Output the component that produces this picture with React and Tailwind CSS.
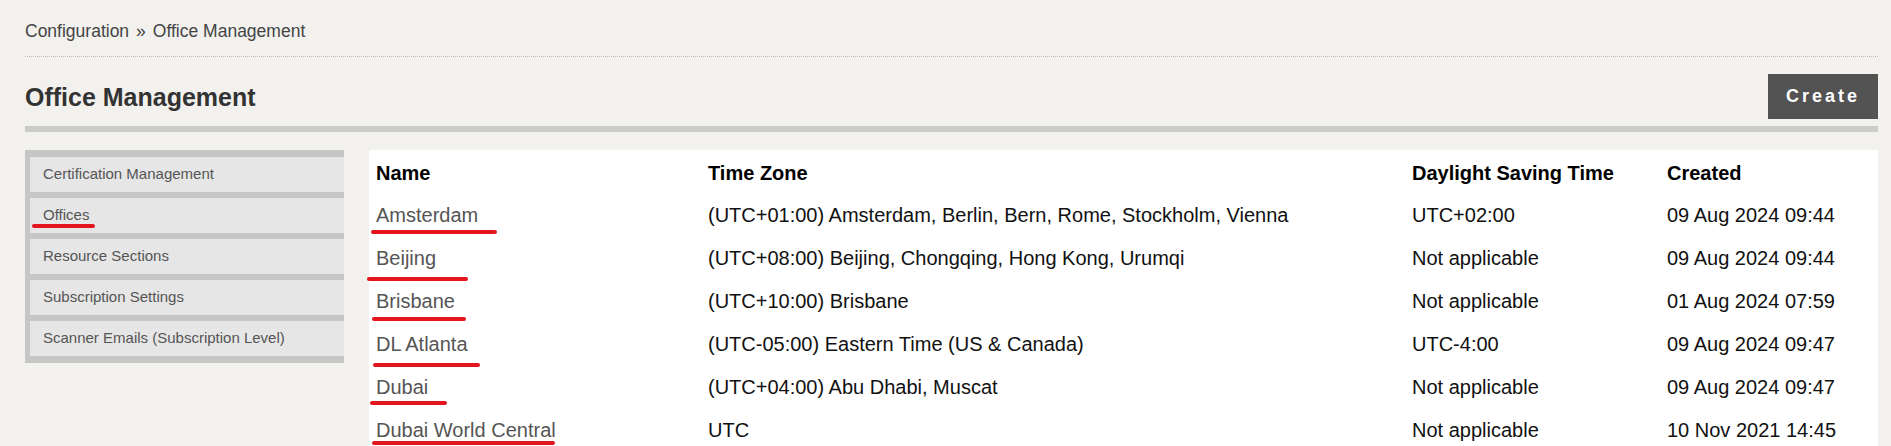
const menu = [
  { label: "Certification Management" },
  { label: "Offices", mark: true },
  { label: "Resource Sections" },
  { label: "Subscription Settings" },
  { label: "Scanner Emails (Subscription Level)" },
];

// mark = red annotation line under the name: [left, top, width]
const offices = [
  { name: "Amsterdam", tz: "(UTC+01:00) Amsterdam, Berlin, Bern, Rome, Stockholm, Vienna", dst: "UTC+02:00", created: "09 Aug 2024 09:44", mark: [2, 36, 126] },
  { name: "Beijing", tz: "(UTC+08:00) Beijing, Chongqing, Hong Kong, Urumqi", dst: "Not applicable", created: "09 Aug 2024 09:44", mark: [-2, 40, 101] },
  { name: "Brisbane", tz: "(UTC+10:00) Brisbane", dst: "Not applicable", created: "01 Aug 2024 07:59", mark: [3, 37, 94] },
  { name: "DL Atlanta", tz: "(UTC-05:00) Eastern Time (US & Canada)", dst: "UTC-4:00", created: "09 Aug 2024 09:47", mark: [4, 40, 107] },
  { name: "Dubai", tz: "(UTC+04:00) Abu Dhabi, Muscat", dst: "Not applicable", created: "09 Aug 2024 09:47", mark: [1, 35, 77] },
  { name: "Dubai World Central", tz: "UTC", dst: "Not applicable", created: "10 Nov 2021 14:45", mark: [3, 32, 183] },
];

const cols = "grid grid-cols-[332px_704px_255px_1fr]";

export default function App() {
  return (
    <div className="min-h-screen bg-[#f2f1ee] pl-[25px] pr-[13px] font-['Liberation_Sans',Arial,sans-serif]">
      {/* breadcrumb */}
      <div className="pt-[21px] pb-[15px] text-[17.5px] leading-[20px] text-[#444] border-b border-dotted border-[#bdbdbd]">
        <span>Configuration</span>
        <span className="mx-[7px]">»</span>
        <span>Office Management</span>
      </div>

      <div className="mt-[17px] flex items-center justify-between">
        <h1 className="text-[25px] leading-[29px] font-bold text-[#333] mt-[1px]">Office Management</h1>
        <button className="h-[45px] px-[18px] bg-[#535353] text-white text-[18px] font-bold tracking-[3px]">
          Create
        </button>
      </div>
      <div className="mt-[7px] h-[6px] bg-[#cbcbcb]" />

      <div className="mt-[18px] flex gap-[25px] items-start">
        {/* side menu */}
        <div className="w-[319px] bg-[#c6c6c6] pl-[5px] pt-[7px] pb-[7px] flex flex-col gap-[6px]">
          {menu.map((m) => (
            <div key={m.label} className="relative h-[35px] bg-[#e6e6e6] pl-[13px] flex items-center text-[15px] text-[#555]">
              {m.label}
              {m.mark && (
                <span className="absolute left-[2px] top-[26px] w-[63px] h-[4px] rounded-full bg-[#e5151d]" />
              )}
            </div>
          ))}
        </div>

        {/* offices table */}
        <div className="flex-1 bg-white pt-[2px] text-[20px] leading-[23px]">
          <div className={`${cols} h-[42px] items-center font-bold text-black`}>
            <div className="px-[7px]">Name</div>
            <div className="px-[7px]">Time Zone</div>
            <div className="px-[7px]">Daylight Saving Time</div>
            <div className="px-[7px]">Created</div>
          </div>
          {offices.map((o) => (
            <div key={o.name} className={`${cols} h-[43px] items-center text-[#111]`}>
              <div className="relative h-full flex items-center px-[7px] text-[#555]">
                {o.name}
                <span
                  className="absolute h-[4px] rounded-full bg-[#e5151d]"
                  style={{ left: o.mark[0], top: o.mark[1], width: o.mark[2] }}
                />
              </div>
              <div className="px-[7px]">{o.tz}</div>
              <div className="px-[7px]">{o.dst}</div>
              <div className="px-[7px]">{o.created}</div>
            </div>
          ))}
        </div>
      </div>
    </div>
  );
}
